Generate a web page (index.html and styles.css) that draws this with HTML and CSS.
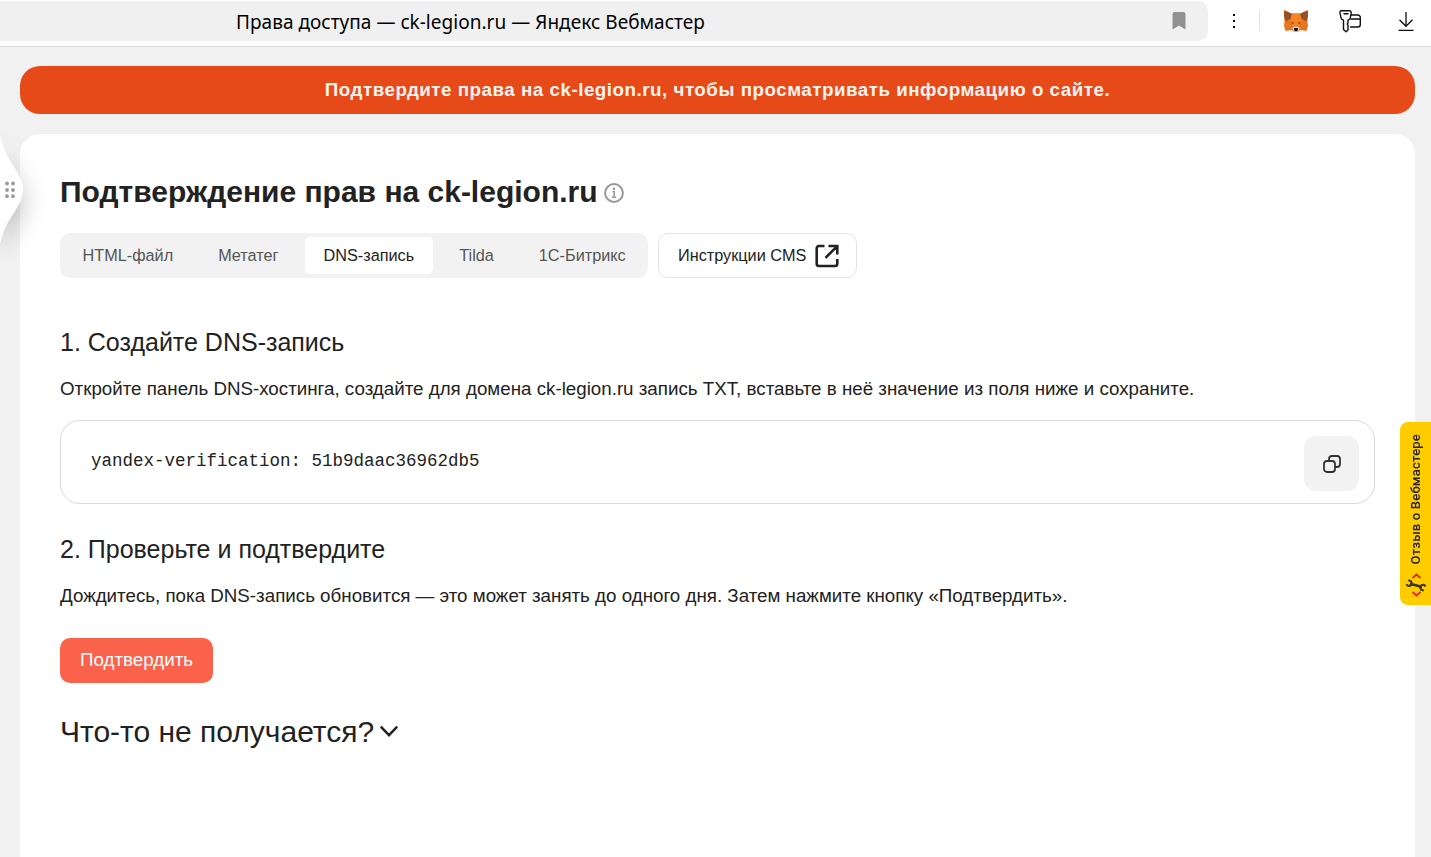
FILE: index.html
```
<!DOCTYPE html>
<html lang="ru">
<head>
  <meta charset="UTF-8">
  <title>Права доступа — ck-legion.ru — Яндекс Вебмастер</title>
  <link rel="stylesheet" href="styles.css">
</head>
<body>
  <!-- панель браузера -->
  <header class="toolbar">
    <div class="address">
      <span class="address-title">Права доступа — ck-legion.ru — Яндекс Вебмастер</span>
      <svg class="bookmark" width="14" height="18" viewBox="0 0 14 18"><path d="M2.500 0h9A2 2 0 0 1 13.500 2v15.500L7 13.500.5 17.500V2a2 2 0 0 1 2-2z" fill="#929292"/></svg>
    </div>
    <svg class="dots" width="4" height="16" viewBox="0 0 4 16"><path d="M1 1h2v2H1zM1 7h2v2H1zM1 13h2v2H1z"/></svg>
    <span class="separator"></span>
    <svg class="fox" width="26" height="24" viewBox="0 0 26 24">
      <path d="M1 1l8 3.500h8L25 1v6l-.5 6 .5 4-1.500 5-6-1-3 2h-3l-3-2-6 1L1 17l.5-4L1 7z" fill="#ea7520"/>
      <path d="M1.500 1.500L9 5 7.500 9.500 3 12.500 1 7zM24.500 1.500L17 5l1.500 4.500 4.500 3L25 7z" fill="#94502a"/>
      <path d="M9 4.500h8l1.500 7L16 17h-6l-2.500-5.500z" fill="#f58322"/>
      <path d="M8 13l3 .7-1 1.500zM18 13l-3 .7 1 1.500z" fill="#6b3a1c"/>
      <path d="M9 19l2-1.500h4l2 1.500-2 3.500h-4z" fill="#d9c9bb"/>
      <path d="M11 19h4v2l-1 1h-2l-1-1z" fill="#171717"/>
    </svg>
    <svg class="keys" width="24" height="24" viewBox="0 0 24 24" fill="none" stroke="#111" stroke-width="1.400" stroke-linejoin="round" stroke-linecap="round">
      <path d="M3.300 1.700h7.900c1.500 0 2.200 1 2 2.200l-.9 5c-.2 1.100-.9 1.800-2.300 2.300V14l-.8 1 .8 1v5L8 22.700 5.500 20.500V11.200C4.100 10.700 3.200 10 3 8.900l-1-5c-.2-1.200.2-2.200 1.300-2.200z"/>
      <path d="M6 4.700h4M13.200 6h6.600a2.500 2.500 0 0 1 2.500 2.500v7a2.500 2.500 0 0 1-2.500 2.500h-7.300M13 10h9"/>
    </svg>
    <svg class="download" width="16" height="20" viewBox="0 0 16 20" fill="none" stroke="#111" stroke-width="1.300"><path d="M8 1v14M1.500 8.800L8 15.300l6.500-6.500M.5 19.300h15"/></svg>
  </header>

  <div class="banner">Подтвердите права на ck-legion.ru, чтобы просматривать информацию о сайте.</div>

  <main class="card">
    <div class="title-row">
      <h1>Подтверждение прав на ck-legion.ru</h1>
      <svg class="info" width="20" height="20" viewBox="0 0 20 20" fill="none" stroke="#999"><circle cx="10" cy="10" r="8.900" stroke-width="2"/><path d="M8.500 8.500h1.700V14M8 14.200h4.200" stroke-width="1.600"/><circle cx="10" cy="5.700" r="1.300" fill="#999" stroke="none"/></svg>
    </div>

    <div class="methods">
      <nav class="tabs">
        <a class="tab">HTML-файл</a>
        <a class="tab">Метатег</a>
        <a class="tab active">DNS-запись</a>
        <a class="tab">Tilda</a>
        <a class="tab">1С-Битрикс</a>
      </nav>
      <a class="cms">
        <span>Инструкции CMS</span>
        <svg width="24" height="24" viewBox="0 0 24 24" fill="none" stroke="#222" stroke-width="2.600"><path d="M9.500 2H4a2.300 2.300 0 0 0-2.300 2.300v15.400A2.300 2.300 0 0 0 4 22h16a2.300 2.300 0 0 0 2.300-2.300V15M13.500 2h8.800v8.500M22 2.300L10.500 13.800"/></svg>
      </a>
    </div>

    <section class="step">
      <h2>1. Создайте DNS-запись</h2>
      <p>Откройте панель DNS-хостинга, создайте для домена ck-legion.ru запись TXT, вставьте в неё значение из поля ниже и сохраните.</p>
      <div class="code-box">
        <code>yandex-verification: 51b9daac36962db5</code>
        <button class="copy">
          <svg width="18" height="18" viewBox="0 0 18 18" fill="none" stroke="#333" stroke-width="1.800"><rect x="1" y="6" width="11" height="11" rx="3"/><path d="M6 6V4a3 3 0 0 1 3-3h5a3 3 0 0 1 3 3v5a3 3 0 0 1-3 3h-2"/></svg>
        </button>
      </div>
    </section>

    <section class="step">
      <h2>2. Проверьте и подтвердите</h2>
      <p>Дождитесь, пока DNS-запись обновится — это может занять до одного дня. Затем нажмите кнопку «Подтвердить».</p>
      <button class="confirm">Подтвердить</button>
    </section>

    <div class="help">
      <span>Что-то не получается?</span>
      <svg width="20" height="12" viewBox="0 0 20 12" fill="none" stroke="#222" stroke-width="2.500" stroke-linecap="round"><path d="M2.500 1.300l7.500 7.900 7.500-7.900"/></svg>
    </div>
  </main>

  <!-- ручка бокового меню -->
  <div class="drawer">
    <svg width="60" height="150" viewBox="0 0 60 150">
      <path class="drawer-shape" d="M0 26C4 42 9 49 16 60C20 67 23 73 23 80C23 87 20 93 15 101C8 112 3 120 0 134z" fill="#fff"/>
      <g fill="#999"><circle cx="7" cy="73.500" r="1.900"/><circle cx="13" cy="73.500" r="1.900"/><circle cx="7" cy="80" r="1.900"/><circle cx="13" cy="80" r="1.900"/><circle cx="7" cy="86.200" r="1.900"/><circle cx="13" cy="86.200" r="1.900"/></g>
    </svg>
  </div>

  <!-- отзыв -->
  <div class="feedback">
    <span>Отзыв о Вебмастере</span>
    <svg width="22" height="24" viewBox="0 0 22 24" fill="none">
      <path d="M7.500 5l4-3.500 4 3.500M7.500 19l4 3.500 4-3.500" stroke="#e32619" stroke-width="1.700"/>
      <path d="M5 10.700l12 3.300" stroke="#3b3510" stroke-width="2.600"/>
      <path d="M3.200 7.600a2.700 2.700 0 1 1-1.700 3.600M18.800 17.100a2.700 2.700 0 1 1 1.700-3.600" stroke="#3b3510" stroke-width="2"/>
    </svg>
  </div>
</body>
</html>
```
FILE: styles.css
```
* {
  box-sizing: border-box;
}
body {
  margin: 0;
  height: 857px;
  overflow: hidden;
  position: relative;
  display: flex;
  flex-direction: column;
  background: #f1f1f1;
  color: #222;
  font-family: "Liberation Sans", Arial, sans-serif;
}
svg {
  display: block;
  flex: none;
}
button {
  border: 0;
  padding: 0;
  font: inherit;
}

/* панель браузера */
.toolbar {
  flex: none;
  display: flex;
  align-items: center;
  height: 47px;
  padding: 1px 16px 5px 0;
  background: #fff;
  border-bottom: 1px solid #dcdcdc;
}
.address {
  display: flex;
  align-items: center;
  justify-content: space-between;
  width: 1208px;
  height: 40px;
  padding: 0 22px 0 236px;
  background: #f0f0f0;
  border-radius: 0 10px 10px 0;
}
.address-title {
  padding-top: 2px;
  color: #000;
  font-family: "Noto Sans", sans-serif;
  font-size: 19px;
  letter-spacing: 0.03px;
  line-height: 38px;
  white-space: nowrap;
}
.dots {
  margin-left: 24px;
}
.separator {
  width: 1px;
  height: 20px;
  margin-left: 23px;
  background: #e2e2e2;
}
.fox {
  margin-left: 23px;
}
.keys {
  margin-left: 29px;
}
.download {
  margin-left: 36px;
}

.banner {
  flex: none;
  height: 48px;
  margin: 19px 16px 20px 20px;
  border-radius: 20px;
  background: #e64a19;
  color: #fff3ee;
  font-size: 18.750px;
  font-weight: bold;
  letter-spacing: 0.52px;
  line-height: 47px;
  text-align: center;
  white-space: nowrap;
}

.card {
  flex: 1;
  margin: 0 16px 0 20px;
  padding: 39px 40px 0;
  background: #fff;
  border-radius: 20px 20px 0 0;
}
.title-row {
  display: flex;
  align-items: center;
  gap: 6px;
  height: 38px;
}
.info {
  margin-top: 2px;
}
h1 {
  margin: 0;
  font-size: 30px;
  line-height: 38px;
  white-space: nowrap;
}

/* способы подтверждения */
.methods {
  display: flex;
  gap: 10px;
  margin-top: 22px;
}
.tabs {
  display: flex;
  width: 588px;
  height: 45px;
  padding: 4px 3px 4px 3.500px;
  background: #f2f2f2;
  border-radius: 10px;
  color: #555;
  font-size: 16.250px;
}
.tab {
  padding: 0 19px;
  margin-right: 7px;
  line-height: 36px;
  white-space: nowrap;
}
.tab.active {
  background: #fff;
  border-radius: 5px;
  color: #222;
}
.cms {
  display: flex;
  align-items: center;
  justify-content: space-between;
  width: 199px;
  height: 45px;
  padding: 0 17px 0 19px;
  border: 1px solid #e4e4e4;
  border-radius: 10px;
  font-size: 16.250px;
  white-space: nowrap;
}

h2 {
  margin: 0;
  font-size: 25px;
  font-weight: normal;
  line-height: 30px;
}
.step {
  margin-top: 30px;
}
.methods + .step {
  margin-top: 49px;
}
.step p {
  margin: 19px 0 0;
  font-size: 18.750px;
  line-height: 26px;
  white-space: nowrap;
}
.code-box {
  display: flex;
  align-items: center;
  justify-content: space-between;
  height: 84px;
  margin-top: 18px;
  padding: 0 15px 0 30px;
  border: 1px solid #d9d9d9;
  border-radius: 20px;
}
code {
  padding-bottom: 2px;
  font-family: "Liberation Mono", monospace;
  font-size: 17.500px;
}
.copy {
  display: flex;
  align-items: center;
  justify-content: center;
  width: 55px;
  height: 55px;
  margin-top: 2px;
  padding-top: 1px;
  background: #f2f2f2;
  border-radius: 12px;
}
.confirm {
  width: 153px;
  height: 45px;
  margin-top: 29px;
  padding-bottom: 2px;
  background: #fa624c;
  border-radius: 10px;
  color: #fff;
  font-size: 18.750px;
  line-height: 42px;
}
.help {
  display: flex;
  align-items: center;
  gap: 5px;
  margin-top: 30px;
  font-size: 30px;
  line-height: 38px;
}

/* поверх страницы */
.drawer {
  position: absolute;
  left: 0;
  top: 110px;
}
.drawer-shape {
  filter: drop-shadow(0 12px 12px rgba(0, 0, 0, 0.25));
}
.feedback {
  position: absolute;
  top: 422px;
  right: 0;
  display: flex;
  flex-direction: column;
  align-items: center;
  justify-content: space-between;
  width: 31px;
  height: 183px;
  padding: 12px 0 8px;
  background: #ffcc00;
  border-radius: 8px 0 0 8px;
}
.feedback span {
  writing-mode: vertical-rl;
  transform: rotate(180deg);
  font-family: Roboto, sans-serif;
  font-size: 13px;
  font-weight: 500;
  letter-spacing: 0.2px;
  white-space: nowrap;
}
```
